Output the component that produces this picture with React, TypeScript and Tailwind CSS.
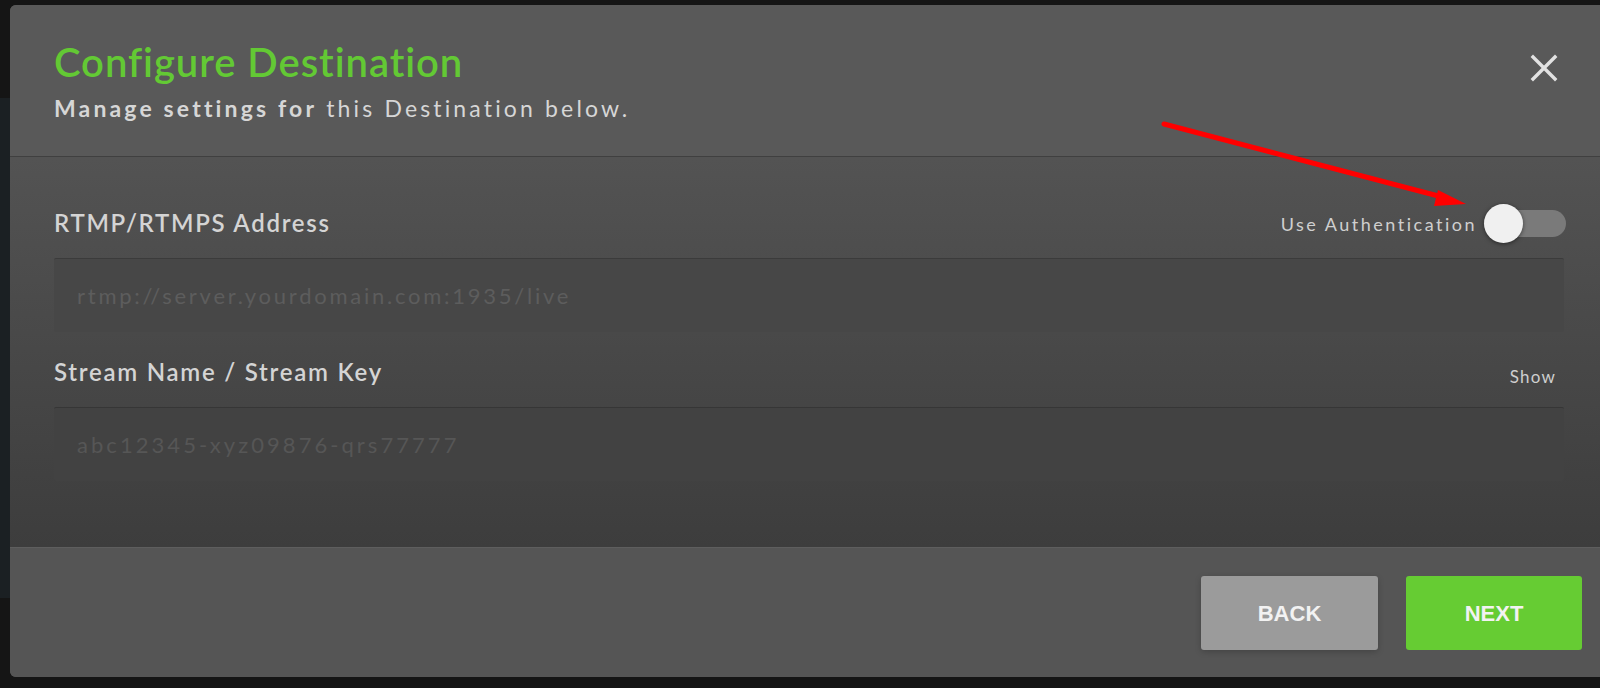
import React from "react";

export default function App() {
  const font = { fontFamily: "Lato, 'Open Sans', sans-serif" } as React.CSSProperties;
  return (
    <div className="relative h-[688px] w-[1600px] overflow-hidden bg-[#151515]" style={font}>
      {/* background strip colours */}
      <div className="absolute left-0 top-[98px] h-[500px] w-[12px] bg-[#1b2023]" />
      <div className="relative flex pl-[10px] pt-[5px]">
        <div className="flex w-[1600px] flex-col overflow-hidden rounded-l-[6px] bg-[#595959]">
          {/* header */}
          <div className="flex h-[151px] items-start justify-between bg-[#595959] pl-[44px] pr-[42px] pt-[34px]">
            <div>
              <div className="text-[40px] leading-[46px] font-semibold tracking-[0.95px] text-[#63c934]">
                Configure Destination
              </div>
              <div className="mt-[9px] text-[23px] leading-[28px] tracking-[3.15px] text-[#d6d6d6]">
                <span className="font-bold">Manage settings for</span> this Destination below.
              </div>
            </div>
            <button className="mt-[15px] flex h-[28px] w-[28px] items-center justify-center">
              <svg width="28" height="28" viewBox="0 0 28 28">
                <path d="M3 3 L25 25 M25 3 L3 25" stroke="#e2e2e2" strokeWidth="3.4" strokeLinecap="square" />
              </svg>
            </button>
          </div>
          <div className="h-[1px] bg-[#404040]" />
          {/* body */}
          <div className="flex h-[390px] flex-col bg-gradient-to-b from-[#535353] to-[#3d3d3d] pl-[44px] pr-[36px] pt-[46px]">
            <div className="flex h-[40px] items-center justify-between">
              <div className="text-[24px] font-semibold tracking-[1.7px] text-[#d4d4d4]">RTMP/RTMPS Address</div>
              <div className="flex items-center">
                <span className="mr-[7px] mt-[2px] text-[18px] tracking-[2.5px] text-[#cfcfcf]">Use Authentication</span>
                <div className="relative mr-[-2px] h-[27px] w-[82px] rounded-full bg-[#7a7a7a]">
                  <div className="absolute left-0 top-[-6px] h-[39px] w-[39px] rounded-full bg-[#f0f0f0] shadow-[0_1px_4px_rgba(0,0,0,0.5)]" />
                </div>
              </div>
            </div>
            <input
              readOnly
              placeholder="rtmp://server.yourdomain.com:1935/live"
              className="mt-[15px] h-[74px] w-full rounded-[2px] border-t border-[#3b3b3b] bg-[#474747] px-[23px] text-[22px] tracking-[2.75px] text-[#ccc] outline-none placeholder:text-[#5d5d5d]"
              style={font}
            />
            <div className="mt-[20px] flex h-[40px] items-center justify-between">
              <div className="text-[24px] font-semibold tracking-[1.75px] text-[#d4d4d4]">Stream Name / Stream Key</div>
              <div className="mr-[8px] mt-[10px] text-[17px] tracking-[1.2px] text-[#cfcfcf]">Show</div>
            </div>
            <input
              readOnly
              placeholder="abc12345-xyz09876-qrs77777"
              className="mt-[15px] h-[74px] w-full rounded-[2px] border-t border-[#363636] bg-[#424242] px-[23px] text-[22px] tracking-[3.05px] text-[#ccc] outline-none placeholder:text-[#565656]"
              style={font}
            />
          </div>
          {/* footer */}
          <div className="flex h-[130px] justify-end gap-[28px] border-t border-[#5e5e5e] bg-[#555555] pr-[18px] pt-[28px]">
            <button
              className="h-[74px] w-[177px] rounded-[3px] bg-[#9b9b9b] text-[22px] font-bold text-[#f2f2f2] shadow-[0_2px_6px_rgba(0,0,0,0.2)]"
              style={{ fontFamily: "'Liberation Sans', Arial, sans-serif" }}
            >
              BACK
            </button>
            <button
              className="h-[74px] w-[176px] rounded-[3px] bg-[#66cc33] text-[22px] font-bold text-[#f2f2f2]"
              style={{ fontFamily: "'Liberation Sans', Arial, sans-serif" }}
            >
              NEXT
            </button>
          </div>
        </div>
      </div>
      {/* red annotation arrow */}
      <svg className="pointer-events-none absolute left-0 top-0" width="1600" height="688">
        <line x1="1164" y1="124" x2="1446" y2="198" stroke="#ff0000" strokeWidth="5" strokeLinecap="round" />
        <polygon points="1466,204 1438,190 1434,206" fill="#ff0000" />
      </svg>
    </div>
  );
}
